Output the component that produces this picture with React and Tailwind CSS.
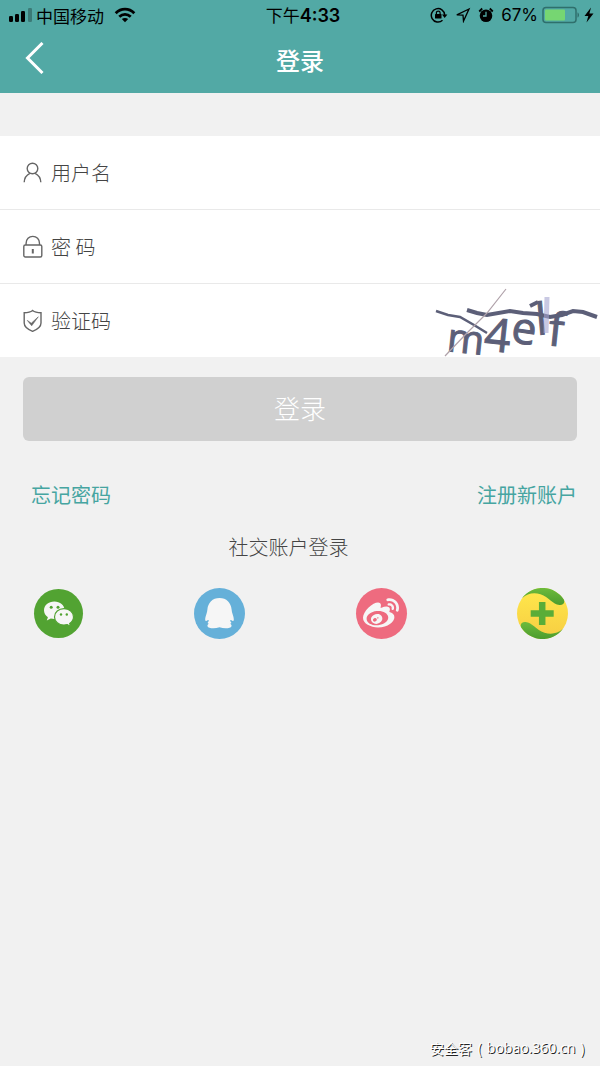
import React from 'react';
import { FaWeibo } from 'react-icons/fa';

const fields = [
    { id: 'username', label: '用户名', type: 'text', icon: UserIcon },
    { id: 'password', label: '密 码', type: 'password', icon: LockIcon },
    { id: 'captcha', label: '验证码', type: 'text', icon: ShieldIcon, extra: Captcha },
];

const socials = [
    { id: 'wechat', icon: WechatLogo },
    { id: 'qq', icon: QQLogo },
    { id: 'weibo', icon: WeiboLogo },
    { id: '360', icon: Logo360 },
];

function UserIcon() {
    return (
        <svg className="h-6 w-5" viewBox="0 0 20 24" fill="none" stroke="#666" strokeWidth="1.4">
            <circle cx="9.500" cy="7.500" r="5.300" />
            <path d="M1.200 21.300c.2-4.600 2.600-7.400 5.700-8.900M17.800 21.300c-.2-4.600-2.600-7.400-5.700-8.900" />
        </svg>
    );
}

function LockIcon() {
    return (
        <svg className="h-6 w-5" viewBox="0 0 20 24" fill="none" stroke="#666" strokeWidth="1.4">
            <rect x="0.8" y="10" width="18" height="12" rx="1.500" />
            <path d="M3.100 9.900V8.300C3.100 4.200 6 1.400 9.800 1.400s6.700 2.800 6.700 6.900v1.600" />
            <path d="M9.800 14v4.500" strokeWidth="2" />
        </svg>
    );
}

function ShieldIcon() {
    return (
        <svg className="h-6 w-5" viewBox="0 0 20 24" fill="none" stroke="#666" strokeWidth="1.4">
            <path d="M9.600 1.500C7.600 3.100 4.700 3.700 1.200 3.700v10.300c0 4 3.800 6.500 8.400 8.300 4.600-1.800 8.400-4.300 8.400-8.300V3.700C14.500 3.700 11.600 3.100 9.600 1.500z" />
            <path d="M4.300 11.400l4 2.800 7-6.400-6.600 9z" fill="#666" strokeWidth=".6" strokeLinejoin="round" />
        </svg>
    );
}

function Captcha() {
    return (
        <svg className="h-full w-[170px] shrink-0 overflow-visible" viewBox="0 0 170 73" fill="none" stroke="#5c5f78">
            <g fill="#5c5f78" strokeWidth="1" fontFamily="'Open Sans', sans-serif">
                <text x="16" y="67" fontSize="40" transform="rotate(6 16 67)">m</text>
                <text x="53" y="66" fontSize="46" transform="rotate(6 53 66)">4</text>
                <text x="80" y="58" fontSize="44" transform="rotate(8 80 58)">e</text>
                <text x="107" y="51" fontSize="44" transform="rotate(-5 107 51)">l</text>
                <text x="117" y="61" fontSize="46" transform="rotate(6 117 61)">f</text>
            </g>
            <path d="M6 27l12 4 12 2 14 8 13 8" strokeWidth="2.500" />
            <path d="M37 26l10 3 10 2 23-4 13 2 14 1 13 3 12-2 11-4 10 1 14 5" strokeWidth="4" />
            <path d="M100 22l8-4" strokeWidth="4" />
            <path d="M117 13l-1 36" stroke="#a5a5d0" strokeWidth="5" opacity=".6" />
            <path d="M15 72l20-21 22-22 19-24" stroke="#b0a2aa" strokeWidth="1.2" />
        </svg>
    );
}

function WechatLogo() {
    return (
        <svg className="h-[51px] w-[51px]" viewBox="0 0 51 51">
            <circle cx="25.500" cy="25.500" r="24.500" fill="#52a332" />
            <path d="M21.300 13.500c-5.800 0-10.300 3.800-10.300 8.800 0 2.900 1.400 5.300 3.900 7l-1.100 3.300 4-2.100c1.100.3 2.200.5 3.500.5 5.800 0 10.300-3.900 10.300-8.700 0-5-4.500-8.800-10.300-8.800z" fill="#f6f6f6" />
            <path d="M31 20.700c-5.400 0-9.500 3.600-9.500 8.200 0 4.500 4.100 8.100 9.500 8.100 1.200 0 2.300-.2 3.300-.4l3.200 1.800-.8-3c2.300-1.500 3.800-3.800 3.800-6.500 0-4.600-4.100-8.200-9.500-8.200z" fill="#f6f6f6" stroke="#52a332" strokeWidth="1.2" />
            <circle cx="18.200" cy="19.300" r="1.500" fill="#52a332" />
            <circle cx="25" cy="19.300" r="1.500" fill="#52a332" />
            <circle cx="28" cy="26.500" r="1.200" fill="#52a332" />
            <circle cx="33.800" cy="26.500" r="1.200" fill="#52a332" />
        </svg>
    );
}

function QQLogo() {
    return (
        <svg className="h-[51px] w-[51px]" viewBox="0 0 51 51">
            <circle cx="25.500" cy="25.500" r="25.500" fill="#65b0d9" />
            <path d="M25.500 10c-7 0-11.600 4.800-12.100 11.500-.1 1.500-.5 2.800-.9 4.200-.7 2.300-1.500 4.500-1.300 6.300.1 1.300 1.300 1.200 2.300.3l1.200-.2c.1 1.100-.2 1.400-.8 2.100-.5.7 0 1.500 1 1.500-1.200.7-1.700 1.500-1.400 2.500.7 2.200 7 2.900 12 1 5 1.900 11.300 1.200 12-1 .3-1-.2-1.800-1.400-2.500 1 0 1.500-.8 1-1.500-.6-.7-.9-1-.8-2.100l1.200.2c1 .9 2.200 1 2.300-.3.2-1.800-.6-4-1.300-6.300-.4-1.400-.8-2.700-.9-4.200C37.100 14.800 32.500 10 25.500 10z" fill="#f6f6f6" />
        </svg>
    );
}

function WeiboLogo() {
    return (
        <span className="flex h-[51px] w-[51px] items-center justify-center rounded-full bg-[#ee6b7f]">
            <FaWeibo className="h-9 w-9 text-[#f6f6f6]" />
        </span>
    );
}

function Logo360() {
    return (
        <svg className="h-[51px] w-[51px]" viewBox="0 0 51 51">
            <defs>
                <linearGradient id="gold" x1="0" y1="0" x2="0" y2="1">
                    <stop offset="0" stopColor="#ffe84c" />
                    <stop offset="1" stopColor="#f7cd42" />
                </linearGradient>
                <linearGradient id="leaf" x1="0" y1="0" x2="0" y2="1">
                    <stop offset="0" stopColor="#6dbb3c" />
                    <stop offset="1" stopColor="#4c9c2e" />
                </linearGradient>
            </defs>
            <circle cx="25.500" cy="25.500" r="25.500" fill="url(#gold)" />
            <path d="M5 10.200A25.500 25.500 0 0 1 46.800 11.500C48.300 15 46 17.300 42.500 17 35.500 16.500 32 9 23.500 6.300 16.500 4.200 10.500 5.500 5 10.200z" fill="url(#leaf)" />
            <path d="M46 40.800A25.500 25.500 0 0 1 4.200 39.500C2.700 36 5 33.700 8.500 34 15.500 34.500 19 42 27.500 44.700 34.500 46.800 40.500 45.500 46 40.800z" fill="url(#leaf)" />
            <path d="M25.200 14v23M13.700 25.400h23" stroke="#5aad38" strokeWidth="6.500" />
        </svg>
    );
}

function StatusBar() {
    return (
        <div className="grid h-[30px] grid-cols-[1fr_auto_1fr] items-center pl-2 pr-[6px] text-[17px] leading-none text-black">
            <div className="flex items-center gap-1">
                <svg className="h-4 w-6" viewBox="0 0 24 16">
                    <rect x="1" y="9" width="4" height="6" rx="1.2" />
                    <rect x="7" y="7" width="4" height="8" rx="1.2" />
                    <rect x="13" y="4" width="4" height="11" rx="1.2" />
                    <rect x="20" y="1" width="4" height="14" rx="1.2" opacity=".28" />
                </svg>
                <span>中国移动</span>
                <svg className="ml-[6px] h-4 w-[22px]" viewBox="0 0 22 16" fill="none" stroke="#000" strokeWidth="2.800">
                    <path d="M1.700 6.200C7 .8 15 .8 20.300 6.200" />
                    <path d="M5.300 9.700c3.300-3.200 8.100-3.200 11.400 0" />
                    <path d="M11 15.300l-3.200-3.200c1.800-1.600 4.600-1.600 6.400 0z" fill="#000" stroke="none" />
                </svg>
            </div>
            <span className="pl-1">下午<span className="font-['Inter'] text-lg leading-none font-semibold">4:33</span></span>
            <div className="flex items-center justify-end">
                <svg className="h-4 w-[18px]" viewBox="0 0 18 16" fill="none" stroke="#000" strokeWidth="1.5">
                    <path d="M12.500 13.300A6.700 6.700 0 1 1 14.700 8" />
                    <path d="M12 7.500h5.400l-2.700 3.600z" fill="#000" stroke="none" />
                    <rect x="5" y="7" width="6.500" height="4.600" rx=".6" fill="#000" stroke="none" />
                    <path d="M6.400 7.500V5.800c0-2.300 3.700-2.300 3.700 0v1.700" strokeWidth="1.2" />
                </svg>
                <svg className="ml-[7px] h-4 w-4" viewBox="0 0 16 16" fill="none" stroke="#000" strokeWidth="1.3">
                    <path d="M14 2L1.800 7.800l6.200.3.500 6z" />
                </svg>
                <svg className="ml-[7px] h-4 w-4" viewBox="0 0 16 16" fill="none" stroke="#000">
                    <circle cx="8" cy="8.700" r="6.300" fill="#000" stroke="none" />
                    <path d="M1.200 4.500l3-3M14.800 4.500l-3-3" strokeWidth="1.800" />
                    <path d="M8 4.800v4.200H5" stroke="#52a9a5" strokeWidth="1.3" />
                </svg>
                <span className="ml-[7px] font-['Inter']">67%</span>
                <svg className="ml-1 h-[18px] w-[38px]" viewBox="0 0 38 18">
                    <rect x="1" y="1.500" width="33" height="15" rx="3" fill="none" stroke="#2f6f6c" strokeWidth="1.5" />
                    <rect x="3" y="3.500" width="20" height="11" rx="1" fill="#76d672" />
                    <path d="M35.500 6.500c2 .6 2 4.400 0 5z" fill="#2f6f6c" />
                </svg>
                <svg className="ml-1 h-4 w-[10px]" viewBox="1 0 10 16">
                    <path d="M8 .5L1.500 9h3.800L3.500 15.500 10.500 6.500H6.400z" />
                </svg>
            </div>
        </div>
    );
}

export default function App() {
    return (
        <div className="flex min-h-screen flex-col bg-[#f1f1f1] font-['Noto_Sans_CJK_SC',sans-serif] text-[#444]">
            <header className="bg-[#52a9a5]">
                <StatusBar />
                {/* Title bar */}
                <div className="grid h-[63px] grid-cols-[1fr_auto_1fr] items-center px-6 pb-[3px] text-white">
                    <button type="button" className="w-5 pb-1">
                        <svg className="h-8 w-5" viewBox="0 0 20 32" fill="none" stroke="#fff" strokeWidth="3">
                            <path d="M18.500 1L3.500 16l15 15" />
                        </svg>
                    </button>
                    <h1 className="text-2xl font-medium">登录</h1>
                </div>
            </header>

            <form className="mt-[43px]" onSubmit={(e) => e.preventDefault()}>
                <div className="divide-y divide-[#e9e9e9] bg-white">
                    {fields.map((field) => (
                        <div key={field.id} className="box-content flex h-[73px] items-center pl-[23px]">
                            <label htmlFor={field.id} className="flex shrink-0 items-center gap-2 text-xl font-light">
                                <field.icon />
                                {field.label}
                            </label>
                            <input id={field.id} type={field.type} className="ml-3 h-full min-w-0 flex-1 text-xl outline-none" />
                            {field.extra && <field.extra />}
                        </div>
                    ))}
                </div>
                <div className="px-[23px] pt-5">
                    <button type="submit" className="h-16 w-full rounded-md bg-[#d0d0d0] pb-1 text-[26px] font-light text-white">
                        登录
                    </button>
                </div>
            </form>

            <div className="flex justify-between pl-[31px] pr-[23px] pt-10 text-xl text-[#46a5a1]">
                <a href="#forgot">忘记密码</a>
                <a href="#register">注册新账户</a>
            </div>

            {/* Social login */}
            <section className="pr-[23px] pt-6">
                <h2 className="text-center text-xl font-light">社交账户登录</h2>
                <div className="flex justify-between pl-[33px] pr-[9px] pt-[27px]">
                    {socials.map((social) => (
                        <button key={social.id} type="button">
                            <social.icon />
                        </button>
                    ))}
                </div>
            </section>

            <footer className="mt-auto flex items-center justify-end gap-[5px] pb-2 pr-[15px] text-sm text-white [text-shadow:1px_1px_0_#222]">
                <span>安全客</span>
                <span>(</span>
                <span className="font-['Open_Sans']">bobao.360.cn</span>
                <span>)</span>
            </footer>
        </div>
    );
}
